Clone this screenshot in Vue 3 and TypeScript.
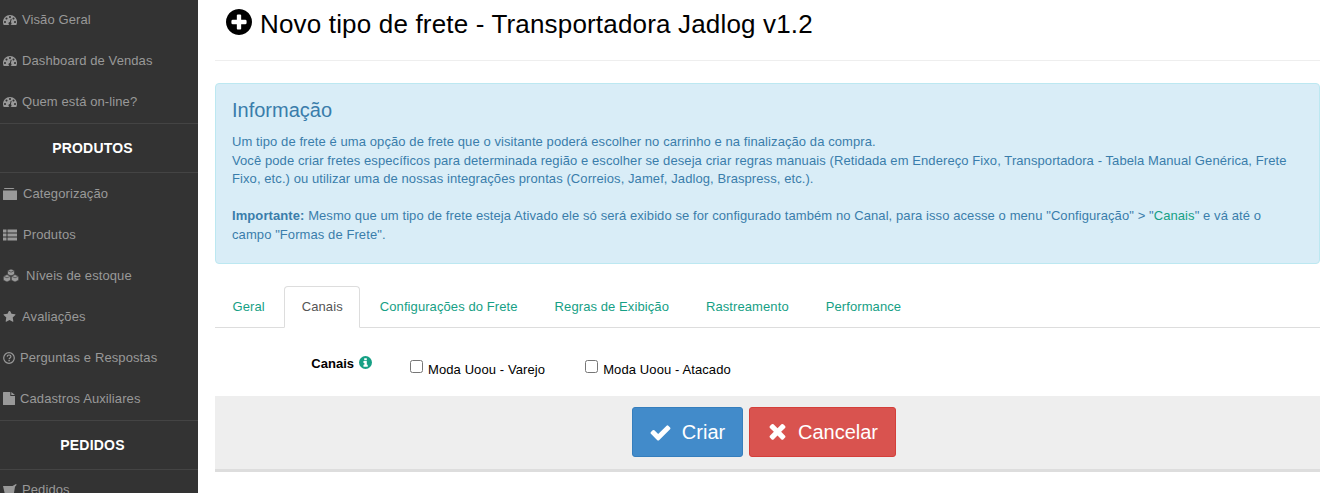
<script setup lang="ts">
type MenuItem = { label: string; icon: string; gap: number }

const topItems: MenuItem[] = [
  { label: 'Visão Geral', icon: 'gauge', gap: 5 },
  { label: 'Dashboard de Vendas', icon: 'gauge', gap: 5 },
  { label: 'Quem está on-line?', icon: 'gauge', gap: 5 }
]

const productItems: MenuItem[] = [
  { label: 'Categorização', icon: 'folder', gap: 6 },
  { label: 'Produtos', icon: 'list', gap: 6 },
  { label: 'Níveis de estoque', icon: 'cubes', gap: 7 },
  { label: 'Avaliações', icon: 'star', gap: 6 },
  { label: 'Perguntas e Respostas', icon: 'question', gap: 5 },
  { label: 'Cadastros Auxiliares', icon: 'file', gap: 5 }
]

const tabs = ['Geral', 'Canais', 'Configurações do Frete', 'Regras de Exibição', 'Rastreamento', 'Performance']
const channels = ['Moda Uoou - Varejo', 'Moda Uoou - Atacado']
</script>

<template>
  <div class="page">
    <aside class="sidebar">
      <ul class="menu menu--first">
        <li v-for="item in topItems" :key="item.label" class="menu__item" :style="{ gap: item.gap + 'px' }">
          <svg class="menu__icon menu__icon--gauge" viewBox="0 256 1792 1280"><path d="M384 1152q0-53-37.500-90.500t-90.500-37.500-90.500 37.500-37.500 90.500 37.500 90.500 90.500 37.500 90.500-37.500 37.500-90.500zm192-448q0-53-37.500-90.500t-90.500-37.500-90.500 37.500-37.500 90.500 37.500 90.500 90.500 37.500 90.500-37.500 37.500-90.500zm428 481l101-382q6-26-7.500-48.500t-38.500-29.500-48 6.500-30 39.500l-101 382q-60 5-107 43.500t-63 98.500q-20 77 20 146t117 89 146-20 89-117q16-60-6-117t-72-91zm660-33q0-53-37.500-90.500t-90.500-37.500-90.500 37.500-37.500 90.500 37.500 90.500 90.500 37.500 90.500-37.500 37.500-90.500zm-640-640q0-53-37.500-90.500t-90.500-37.500-90.500 37.500-37.500 90.500 37.500 90.500 90.500 37.500 90.500-37.500 37.500-90.500zm448 192q0-53-37.500-90.500t-90.500-37.500-90.500 37.500-37.500 90.500 37.500 90.500 90.500 37.500 90.500-37.500 37.500-90.500zm320 448q0 261-141 483-19 29-54 29h-1402q-35 0-54-29-141-221-141-483 0-182 71-348t191-286 286-191 348-71 348 71 286 191 191 286 71 348z" /></svg>
          <span>{{ item.label }}</span>
        </li>
      </ul>
      <h3 class="section">PRODUTOS</h3>
      <ul class="menu">
        <li v-for="item in productItems" :key="item.label" class="menu__item" :style="{ gap: item.gap + 'px' }">
          <svg v-if="item.icon === 'folder'" class="menu__icon" viewBox="0 0 14 12"><path d="M1.200 0h9.300l1 1H1.200zM0 2.600h14V11.400a.6.6 0 0 1-.6.600H.6a.6.6 0 0 1-.6-.6z" /></svg>
          <svg v-else-if="item.icon === 'list'" class="menu__icon" viewBox="0 0 14 12"><path d="M0 .5h3.500v3H0zM4.500 .5H14v3H4.500zM0 4.500h3.500v3H0zM4.500 4.500H14v3H4.500zM0 8.500h3.500v3H0zM4.500 8.500H14v3H4.500z" /></svg>
          <svg v-else-if="item.icon === 'cubes'" class="menu__icon menu__icon--wide" viewBox="0 0 16 13">
            <g stroke="#333" stroke-width=".6">
              <path d="M8 0l3.500 1.600v3.800L8 7 4.500 5.400V1.600z" />
              <path d="M4 5.600l3.700 1.600v4L4 13 .3 11.200v-4z" />
              <path d="M12 5.600l3.700 1.600v4L12 13l-3.700-1.800v-4z" />
              <path d="M4.500 1.600 8 3.200l3.500-1.600M.3 7.200 4 8.800l3.700-1.600M8.300 7.200 12 8.800l3.700-1.600" fill="none" />
            </g>
          </svg>
          <svg v-else-if="item.icon === 'star'" class="menu__icon menu__icon--star" viewBox="0 150 1792 1500"><path d="M1728 647q0 22-26 48l-363 354 86 500q1 7 1 20 0 21-10.500 35.500t-30.500 14.500q-19 0-40-12l-449-236-449 236q-22 12-40 12-21 0-31.500-14.500t-10.500-35.500q0-6 2-20l86-500-364-354q-25-27-25-48 0-37 56-46l502-73 225-455q19-41 49-41t49 41l225 455 502 73q56 9 56 46z" /></svg>
          <svg v-else-if="item.icon === 'question'" class="menu__icon menu__icon--small" viewBox="0 0 12 12"><circle cx="6" cy="6" r="5.300" fill="none" stroke="#999" stroke-width="1.200" /><path d="M4.200 4.600C4.300 3.600 5 3 6 3s1.900.6 1.900 1.600c0 1.400-1.800 1.400-1.800 2.600" fill="none" stroke="#999" stroke-width="1.200" /><rect x="5.400" y="8" width="1.400" height="1.300" /></svg>
          <svg v-else class="menu__icon menu__icon--file" viewBox="0 0 12 13"><path d="M0 .6A.6.6 0 0 1 .6 0H7.300v4h4.700v8.400a.6.6 0 0 1-.6.600H.6a.6.6 0 0 1-.6-.6zM8.300 0 12 3H8.300z" /></svg>
          <span>{{ item.label }}</span>
        </li>
      </ul>
      <h3 class="section">PEDIDOS</h3>
      <ul class="menu menu--last">
        <li class="menu__item menu__item--cut">
          <svg class="menu__icon" viewBox="0 0 14 12"><path d="M0 2h9.500L13 0l.7.7-1.700 2L10.500 12H2.300z" /></svg>
          <span>Pedidos</span>
        </li>
      </ul>
    </aside>

    <main class="content">
      <header class="title">
        <svg class="title__icon" viewBox="128 128 1536 1536"><path d="M1344 960v-128q0-26-19-45t-45-19h-256v-256q0-26-19-45t-45-19h-128q-26 0-45 19t-19 45v256h-256q-26 0-45 19t-19 45v128q0 26 19 45t45 19h256v256q0 26 19 45t45 19h128q26 0 45-19t19-45v-256h256q26 0 45-19t19-45zm320-64q0 209-103 385.500t-279.500 279.500-385.500 103-385.500-103-279.500-279.500-103-385.500 103-385.500 279.500-279.500 385.500-103 385.500 103 279.500 279.500 103 385.500z" /></svg>
        <h1>Novo tipo de frete - Transportadora Jadlog v1.2</h1>
      </header>

      <section class="alert">
        <h4>Informação</h4>
        <p>
          Um tipo de frete é uma opção de frete que o visitante poderá escolher no carrinho e na finalização da compra.<br />
          Você pode criar fretes específicos para determinada região e escolher se deseja criar regras manuais (Retidada em Endereço Fixo, Transportadora - Tabela Manual Genérica, Frete Fixo, etc.) ou utilizar uma de nossas integrações prontas (Correios, Jamef, Jadlog, Braspress, etc.).<br /><br />
          <strong>Importante:</strong> Mesmo que um tipo de frete esteja Ativado ele só será exibido se for configurado também no Canal, para isso acesse o menu "Configuração" &gt; "<a href="#">Canais</a>" e vá até o campo "Formas de Frete".
        </p>
      </section>

      <nav class="tabs">
        <a v-for="tab in tabs" :key="tab" href="#" class="tabs__link" :class="{ 'tabs__link--active': tab === 'Canais' }">{{ tab }}</a>
      </nav>

      <div class="field">
        <div class="field__label">
          <b>Canais</b>
          <svg class="field__info" viewBox="0 0 14 14"><circle cx="7" cy="7" r="7" fill="#16a085" /><path d="M5.600 2.300h2.800v2.200H5.600zM4.800 5.500h3.600v4h1v2H4.800v-2h1V7.500h-1z" fill="#fff" /></svg>
        </div>
        <div class="field__options">
          <label v-for="channel in channels" :key="channel" class="check">
            <input type="checkbox" />
            <span>{{ channel }}</span>
          </label>
        </div>
      </div>

      <footer class="actions">
        <button class="btn btn--primary" type="button">
          <svg viewBox="0 0 1792 1792" width="23" height="23"><path d="M1671 566q0 40-28 68l-724 724-136 136q-28 28-68 28t-68-28l-136-136-362-362q-28-28-28-68t28-68l136-136q28-28 68-28t68 28l294 295 656-657q28-28 68-28t68 28l136 136q28 28 28 68z" /></svg>
          Criar
        </button>
        <button class="btn btn--danger" type="button">
          <svg class="btn__times" viewBox="0 0 1408 1792" width="19" height="24"><path d="M1298 1322q0 40-28 68l-136 136q-28 28-68 28t-68-28l-294-294-294 294q-28 28-68 28t-68-28l-136-136q-28-28-28-68t28-68l294-294-294-294q-28-28-28-68t28-68l136-136q28-28 68-28t68 28l294 294 294-294q28-28 68-28t68 28l136 136q28 28 28 68t-28 68l-294 294 294 294q28 28 28 68z" /></svg>
          Cancelar
        </button>
      </footer>
    </main>
  </div>
</template>

<style scoped>
.page {
  display: flex;
  height: 493px;
  overflow: hidden;
  font-family: "Liberation Sans", Arial, sans-serif;
  font-size: 13px;
  color: #000;
  background: #fff;
}

.sidebar {
  flex: 0 0 198px;
  background: #333;
  overflow: hidden;
  color: #999;
}

.menu {
  list-style: none;
  margin: 0;
  padding: 0 0 1px;
}

.menu--first {
  margin-top: -1px;
}

.menu--last {
  margin-top: -1px;
}

.menu__item {
  display: flex;
  align-items: center;
  height: 41px;
  padding-left: 3px;
  line-height: 41px;
  letter-spacing: 0.1px;
}

.menu__item--cut {
  gap: 5px;
}

.menu__icon {
  flex: none;
  width: 14px;
  height: 12px;
  fill: #999;
}

.menu__icon--gauge {
  height: 10px;
}

.menu__icon--wide {
  width: 16px;
  height: 13px;
}

.menu__icon--star {
  width: 13px;
  height: 11px;
}

.menu__icon--small {
  width: 12px;
  height: 12px;
}

.menu__icon--file {
  width: 12px;
  height: 13px;
}

.section {
  margin: 0;
  height: 50px;
  padding-right: 13px;
  line-height: 48px;
  border-top: 1px solid #444;
  border-bottom: 1px solid #444;
  box-sizing: border-box;
  text-align: center;
  font-size: 14px;
  font-weight: 700;
  letter-spacing: 0.2px;
  color: #fff;
}

.content {
  flex: 1;
  min-width: 0;
  padding: 0 3px 0 17px;
}

.title {
  display: flex;
  align-items: center;
  gap: 8px;
  height: 61px;
  box-sizing: border-box;
  padding: 0 0 11px 11px;
  border-bottom: 1px solid #eee;
}

.title__icon {
  width: 26px;
  height: 26px;
  margin-bottom: 6px;
}

.title h1 {
  margin: 0;
  font-size: 26px;
  font-weight: 400;
  line-height: 1.1;
  letter-spacing: 0.17px;
}

.alert {
  margin-top: 22px;
  height: 181px;
  box-sizing: border-box;
  padding: 15px 20px 15px 16px;
  background: #d9edf7;
  border: 1px solid #bce8f1;
  border-radius: 4px;
  color: #3a7dab;
}

.alert h4 {
  margin: 0 0 12px;
  font-size: 20px;
  font-weight: 400;
  line-height: 22px;
}

.alert p {
  margin: 0;
  line-height: 18.57px;
  letter-spacing: 0.085px;
}

.alert a {
  color: #16a085;
  text-decoration: none;
}

.tabs {
  display: flex;
  margin-top: 22px;
  height: 42px;
  box-sizing: border-box;
  border-bottom: 1px solid #ddd;
}

.tabs__link {
  height: 42px;
  box-sizing: border-box;
  padding: 0 16.5px;
  margin-right: 2px;
  line-height: 40px;
  letter-spacing: 0.09px;
  color: #16a085;
  text-decoration: none;
  border: 1px solid transparent;
  border-radius: 4px 4px 0 0;
}

.tabs__link--active {
  color: #555;
  background: #fff;
  border-color: #ddd #ddd #fff;
}

.field {
  display: flex;
  height: 68px;
}

.field__label {
  display: flex;
  align-items: flex-start;
  justify-content: flex-end;
  gap: 5px;
  width: 157px;
  padding-top: 28px;
  box-sizing: border-box;
  line-height: 15px;
}

.field__info {
  width: 13px;
  height: 13px;
}

.field__options {
  display: flex;
  gap: 40px;
  margin-left: 38px;
  padding-top: 31px;
}

.check {
  display: flex;
  align-items: flex-start;
  gap: 5px;
  line-height: 18px;
  letter-spacing: 0.1px;
}

.check input {
  width: 13px;
  height: 13px;
  margin: 1px 0 0;
}

.check span {
  padding-top: 2px;
}

.actions {
  display: flex;
  justify-content: center;
  gap: 6px;
  height: 76px;
  box-sizing: border-box;
  padding: 11px 8px 0 0;
  background: #eee;
  border-bottom: 3px solid #ddd;
}

.btn {
  display: flex;
  align-items: center;
  justify-content: center;
  gap: 10px;
  height: 50px;
  border: 1px solid transparent;
  border-radius: 3px;
  font-family: inherit;
  font-size: 20px;
  color: #fff;
}

.btn svg {
  fill: #fff;
}

.btn__times {
  margin-bottom: 3px;
}

.btn--primary {
  width: 111px;
  background: #428bca;
  border-color: #357ebd;
}

.btn--danger {
  width: 147px;
  gap: 11px;
  padding-left: 8px;
  background: #d9534f;
  border-color: #d43f3a;
}
</style>

<style>
html,
body {
  margin: 0;
  overflow: hidden;
}
</style>
